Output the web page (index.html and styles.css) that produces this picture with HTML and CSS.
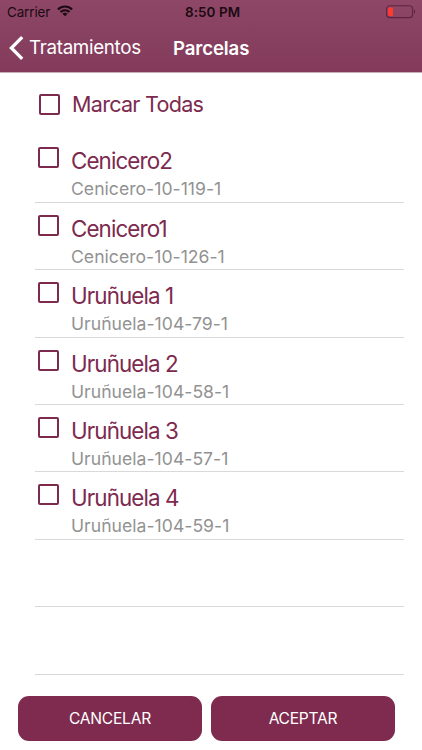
FILE: index.html
```html
<!DOCTYPE html>
<html lang="es">
<head>
<meta charset="utf-8">
<title>Parcelas</title>
<link rel="stylesheet" href="styles.css">
</head>
<body>
<header class="header">
  <div class="status">
    <span class="carrier">Carrier</span>
    <svg class="wifi" width="16" height="12" viewBox="0 0 16 12" fill="none" stroke="#1b0a12" stroke-width="2.1">
      <path d="M0.9 4.4C5 .5 11 .5 15.1 4.4"/>
      <path d="M3.5 7C6 4.6 10 4.6 12.5 7"/>
      <path d="M8 11.3L5.4 8.7C6.9 7.4 9.1 7.4 10.6 8.7Z" fill="#1b0a12" stroke="none"/>
    </svg>
    <span class="clock">8:50 PM</span>
    <svg class="battery" width="30" height="14" viewBox="0 0 30 14">
      <rect x=".6" y=".8" width="26" height="11.8" rx="3" fill="none" stroke="#60243f" stroke-width="1.1"/>
      <rect x="2.1" y="2.4" width="4.9" height="8.6" rx="1" fill="#ff3b30"/>
      <path d="M28 4.6C29.6 5.2 29.6 8.2 28 8.8Z" fill="#60243f"/>
    </svg>
  </div>
  <nav class="nav">
    <svg class="chevron" width="15" height="24" viewBox="0 0 15 24" fill="none" stroke="#fff" stroke-width="3.3"><path d="M13.2 1.2L2.4 12L13.2 22.8"/></svg>
    <span class="back">Tratamientos</span>
    <h1 class="title">Parcelas</h1>
  </nav>
</header>
<main>
  <label class="all"><span class="box"></span><span class="all-name">Marcar Todas</span></label>
  <ul class="list">
    <li class="row"><span class="box"></span><div class="text"><div class="name">Cenicero2</div><div class="code">Cenicero-10-119-1</div></div></li>
    <li class="row"><span class="box"></span><div class="text"><div class="name">Cenicero1</div><div class="code">Cenicero-10-126-1</div></div></li>
    <li class="row"><span class="box"></span><div class="text"><div class="name">Uruñuela 1</div><div class="code">Uruñuela-104-79-1</div></div></li>
    <li class="row"><span class="box"></span><div class="text"><div class="name">Uruñuela 2</div><div class="code">Uruñuela-104-58-1</div></div></li>
    <li class="row"><span class="box"></span><div class="text"><div class="name">Uruñuela 3</div><div class="code">Uruñuela-104-57-1</div></div></li>
    <li class="row"><span class="box"></span><div class="text"><div class="name">Uruñuela 4</div><div class="code">Uruñuela-104-59-1</div></div></li>
    <li class="row"></li>
    <li class="row"></li>
  </ul>
</main>
<footer class="actions">
  <button class="btn">CANCELAR</button>
  <button class="btn">ACEPTAR</button>
</footer>
</body>
</html>
```
FILE: styles.css
```css
* { box-sizing: border-box; }
body {
  margin: 0;
  height: 750px;
  overflow: hidden;
  background: #fff;
  color: #7d2a4f;
  font-family: Inter, "Liberation Sans", sans-serif;
  white-space: nowrap;
}
.header {
  height: 73px;
  background: linear-gradient(#8e4767, #833a5b);
  border-bottom: 1px solid #c9aeba;
}
.status {
  height: 24px;
  display: grid;
  grid-template-columns: 50px 128px 201px 30px;
  padding-left: 7px;
  line-height: 24px;
  color: #1b0a12;
}
.carrier { font-size: 13.4px; letter-spacing: -0.1px; }
.wifi { margin-top: 5px; }
.clock { font-size: 13.4px; font-weight: 600; letter-spacing: 0.1px; }
.battery { margin-top: 5px; }
.nav {
  height: 47px;
  display: flex;
  align-items: center;
  padding-left: 9px;
  color: #fff;
}
.back { width: 144px; margin-left: 5px; font-size: 18.8px; letter-spacing: -0.32px; }
.title { margin: 0; font-size: 18.6px; font-weight: 600; letter-spacing: -0.1px; }
.all {
  display: flex;
  align-items: center;
  height: 62.4px;
  padding-left: 39px;
}
.box {
  flex: none;
  width: 21px;
  height: 21px;
  border: 2px solid #7d2a4f;
  border-radius: 2px;
}
.all-name { margin-left: 12px; font-size: 21.6px; letter-spacing: -0.75px; }
.list { list-style: none; margin: 0 18px 0 35px; padding: 0; }
.row {
  height: 67.4px;
  display: flex;
  padding: 12px 0 0 3px;
  border-bottom: 1px solid #d9d9d9;
}
.text { margin-left: 12px; }
.name { font-size: 22.4px; line-height: 28px; letter-spacing: -0.9px; }
.code { font-size: 17.6px; line-height: 27px; letter-spacing: 0.02px; color: #929292; }
.actions {
  display: flex;
  gap: 9px;
  padding: 21px 27px 0 18px;
}
.btn {
  flex: 1;
  height: 45px;
  border: 0;
  border-radius: 11px;
  background: #7f2b4f;
  color: #fff;
  font: 15.6px Inter, sans-serif;
  letter-spacing: -0.25px;
}
```
